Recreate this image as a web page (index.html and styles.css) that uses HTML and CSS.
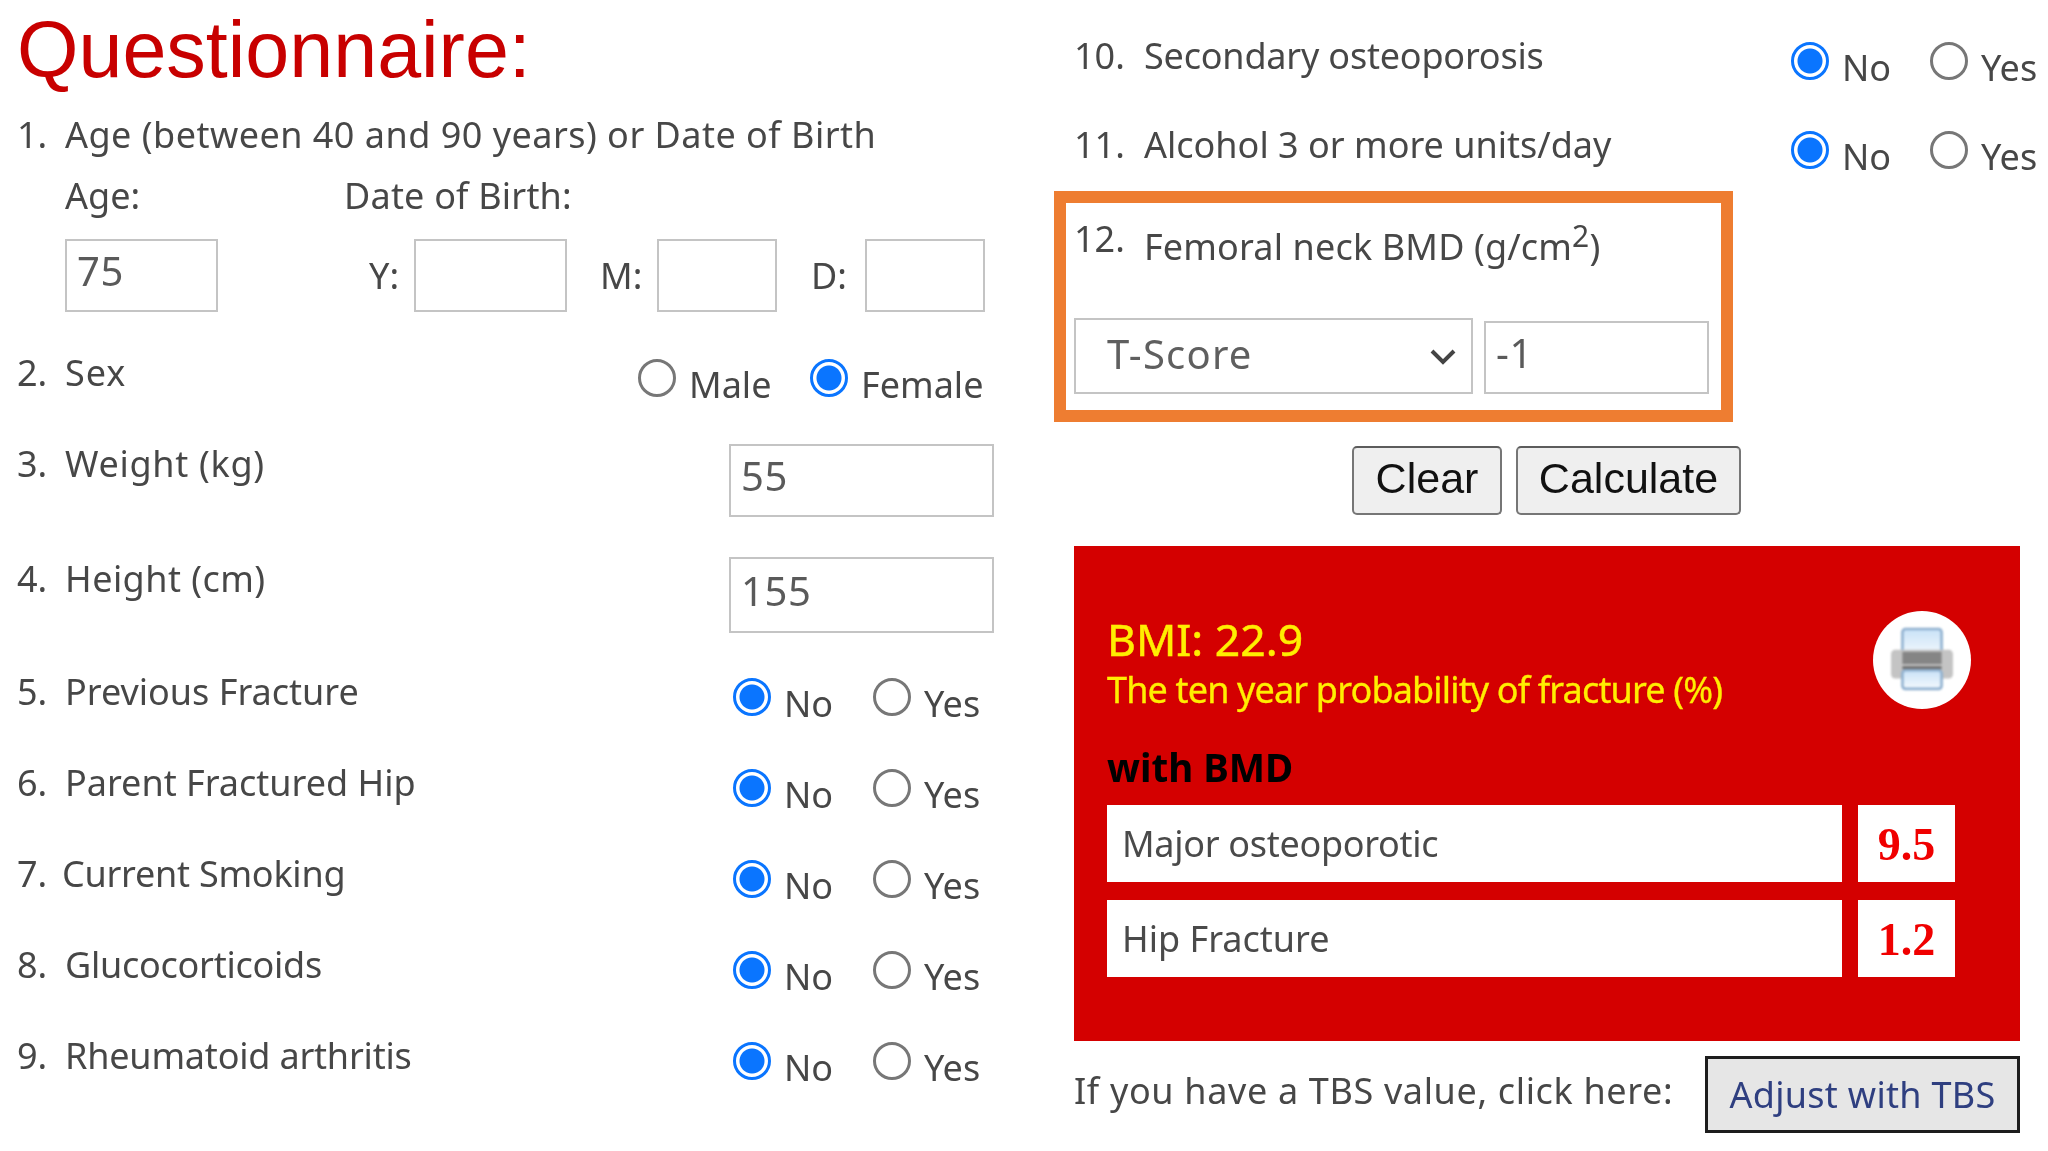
FILE: index.html
```html
<!DOCTYPE html>
<html lang="en">
<head>
<meta charset="utf-8">
<title>Questionnaire</title>
<link rel="stylesheet" href="styles.css">
</head>
<body>
<main class="page">
  <section class="left">
    <h1 class="title">Questionnaire:</h1>
    <div class="q q-first"><span class="num">1.</span><span class="t-age">Age (between 40 and 90 years) or Date of Birth</span></div>
    <div class="birth-labels"><span class="age-label">Age:</span><span class="t-dob">Date of Birth:</span></div>
    <div class="birth-inputs">
      <input class="field f-age" type="text" value="75">
      <label class="dl dl-y">Y:</label><input class="field f-y" type="text">
      <label class="dl dl-m">M:</label><input class="field f-md" type="text">
      <label class="dl dl-d">D:</label><input class="field f-md" type="text">
    </div>
    <div class="q q-sex"><span class="num">2.</span><span class="t-sex">Sex</span>
      <div class="opts opts-sex">
        <label class="opt opt-male"><input type="radio" name="sex"><span>Male</span></label>
        <label class="opt"><input type="radio" name="sex" checked><span>Female</span></label>
      </div>
    </div>
    <div class="q q-weight"><span class="num">3.</span><span class="t-weight">Weight (kg)</span><input class="field f-wide" type="text" value="55"></div>
    <div class="q q-height"><span class="num">4.</span><span class="t-height">Height (cm)</span><input class="field f-wide" type="text" value="155"></div>
    <div class="q q-yn"><span class="num">5.</span><span>Previous Fracture</span><div class="opts"><label class="opt"><input type="radio" name="q5" checked><span>No</span></label><label class="opt"><input type="radio" name="q5"><span>Yes</span></label></div></div>
    <div class="q q-yn"><span class="num">6.</span><span>Parent Fractured Hip</span><div class="opts"><label class="opt"><input type="radio" name="q6" checked><span>No</span></label><label class="opt"><input type="radio" name="q6"><span>Yes</span></label></div></div>
    <div class="q q-yn"><span class="num num-7">7.</span><span class="t-tight">Current Smoking</span><div class="opts"><label class="opt"><input type="radio" name="q7" checked><span>No</span></label><label class="opt"><input type="radio" name="q7"><span>Yes</span></label></div></div>
    <div class="q q-yn"><span class="num">8.</span><span class="t-tight">Glucocorticoids</span><div class="opts"><label class="opt"><input type="radio" name="q8" checked><span>No</span></label><label class="opt"><input type="radio" name="q8"><span>Yes</span></label></div></div>
    <div class="q q-yn"><span class="num">9.</span><span class="t-snug">Rheumatoid arthritis</span><div class="opts"><label class="opt"><input type="radio" name="q9" checked><span>No</span></label><label class="opt"><input type="radio" name="q9"><span>Yes</span></label></div></div>
  </section>
  <section class="right">
    <div class="q q-r q-r10"><span class="num">10.</span><span class="t-snug">Secondary osteoporosis</span><div class="opts"><label class="opt"><input type="radio" name="q10" checked><span>No</span></label><label class="opt"><input type="radio" name="q10"><span>Yes</span></label></div></div>
    <div class="q q-r q-r11"><span class="num">11.</span><span>Alcohol 3 or more units/day</span><div class="opts"><label class="opt"><input type="radio" name="q11" checked><span>No</span></label><label class="opt"><input type="radio" name="q11"><span>Yes</span></label></div></div>
    <div class="bmd">
      <div class="bmd-title"><span class="num num-12">12.</span><span class="bmd-text">Femoral neck BMD (g/cm<sup>2</sup>)</span></div>
      <div class="bmd-fields">
        <div class="select-wrap">
          <select class="select"><option>T-Score</option></select>
          <svg class="chev" viewBox="0 0 28 18" aria-hidden="true"><path d="M3 3l11 11L25 3" fill="none" stroke="#444" stroke-width="4"/></svg>
        </div>
        <input class="field f-score" type="text" value="-1">
      </div>
    </div>
    <div class="actions">
      <button class="btn btn-clear" type="button">Clear</button>
      <button class="btn btn-calc" type="button">Calculate</button>
    </div>
    <div class="panel">
      <div class="panel-head">
        <div>
          <div class="bmi">BMI: 22.9</div>
          <div class="prob">The ten year probability of fracture (%)</div>
        </div>
        <div class="print">
          <svg class="print-icon" viewBox="0 0 64 64" width="66" height="66" aria-hidden="true">
            <defs>
              <linearGradient id="paper" x1="0" y1="0" x2="0" y2="1"><stop offset="0" stop-color="#c9e2f7"/><stop offset="1" stop-color="#f4f9fd"/></linearGradient>
            </defs>
            <rect x="13" y="2" width="38" height="26" rx="3" fill="url(#paper)" stroke="#8fb0cf" stroke-width="2.5"/>
            <rect x="2" y="22" width="60" height="28" rx="4" fill="#c4c4c4"/>
            <rect x="13" y="24" width="38" height="12" fill="#858585"/>
            <rect x="13" y="38" width="38" height="3" fill="#6e6e6e"/>
            <rect x="13" y="42" width="38" height="18" rx="3" fill="url(#paper)" stroke="#8fb0cf" stroke-width="2.5"/>
          </svg>
        </div>
      </div>
      <div class="with">with BMD</div>
      <div class="res"><div class="res-name t-major">Major osteoporotic</div><div class="res-val">9.5</div></div>
      <div class="res"><div class="res-name">Hip Fracture</div><div class="res-val">1.2</div></div>
    </div>
    <div class="tbs">
      <span class="tbs-text">If you have a TBS value, click here:</span>
      <button class="tbs-btn" type="button">Adjust with TBS</button>
    </div>
  </section>
</main>
</body>
</html>
```

FILE: styles.css
```css
* { box-sizing: border-box; }
html, body { margin: 0; padding: 0; background: #fff; }
body {
  font-family: "Noto Sans", Tahoma, sans-serif;
  font-size: 36px;
  line-height: 50px;
  color: #474747;
}
.page {
  width: 2048px;
  height: 1151px;
  display: flex;
  overflow: hidden;
  filter: blur(0.5px);
}
.left { width: 1074px; padding-left: 17px; flex: none; }
.right { width: 974px; flex: none; }

.title {
  margin: 0;
  height: 110px;
  font-family: "Liberation Sans", Arial, sans-serif;
  font-size: 79px;
  line-height: 100px;
  font-weight: 400;
  color: #c80000;
}
.q { display: flex; width: 977px; height: 50px; }
.num { width: 48px; flex: none; }
.num-7 { width: 45px; }

.t-age { letter-spacing: 0.48px; }
.t-dob { letter-spacing: 0.2px; }
.t-sex { letter-spacing: 1px; }
.t-weight { letter-spacing: 0.7px; }
.t-height { letter-spacing: 0.45px; }
.t-tight { letter-spacing: -0.25px; }
.t-snug { letter-spacing: -0.2px; }

.birth-labels { display: flex; padding-left: 48px; margin-top: 11px; }
.age-label { width: 279px; }
.birth-inputs { display: flex; margin-top: 18px; height: 73px; align-items: center; padding-left: 48px; }
.field {
  height: 73px;
  border: 2px solid #c4c4c4;
  background: #fff;
  padding: 0 10px 10px 10px;
  font-family: inherit;
  font-size: 40px;
  letter-spacing: 0.6px;
  color: #5a5a5a;
  outline: 0;
}
.f-age { width: 153px; }
.f-y { width: 153px; }
.f-md { width: 120px; }
.dl { flex: none; }
.dl-y { width: 45px; margin-left: 151px; }
.dl-m { width: 57px; margin-left: 33px; }
.dl-d { width: 54px; margin-left: 34px; }

.opts { margin-left: auto; width: 261px; display: flex; flex: none; }
.opt { display: flex; width: 140px; flex: none; }
.opt input {
  appearance: none;
  flex: none;
  width: 38px;
  height: 38px;
  margin: 11px 13px 0 0;
  border: 3px solid #777;
  border-radius: 50%;
  background: #fff;
}
.opt input:checked {
  border: 3px solid #0a75ff;
  background: radial-gradient(circle, #0a75ff 0 12px, #fff 13px);
}
.opt span { margin-top: 12px; }

.q-sex { margin-top: 36px; }
.opts-sex { width: 356px; }
.opt-male { width: 172px; }
.q-weight { margin-top: 41px; height: 97px; }
.q-height { margin-top: 18px; height: 101px; }
.f-wide { width: 265px; margin-left: auto; margin-top: 5px; }
.q-height .f-wide { height: 76px; margin-top: 3px; }
.q-yn { height: 91px; }
.q-height + .q-yn { margin-top: 12px; }

.q-r { width: 966px; }
.q-r .num { width: 70px; }
.q-r .opts { width: 249px; }
.q-r .opt { width: 139px; }
.q-r10 { margin-top: 31px; height: 89px; }
.q-r11 { height: 71px; }

.bmd {
  margin-left: -20px;
  width: 679px;
  height: 231px;
  border: 12px solid #ee7d31;
  padding: 0 8px;
}
.bmd-title { display: flex; height: 115px; }
.num-12 { width: 70px; margin-top: 11px; }
.bmd-text { margin-top: 19px; letter-spacing: 0.15px; }
.bmd-text sup { font-size: 30px; line-height: 0; }
.bmd-fields { display: flex; align-items: flex-end; gap: 11px; }
.select-wrap { position: relative; flex: none; }
.select {
  appearance: none;
  display: block;
  width: 399px;
  height: 76px;
  border: 2px solid #c4c4c4;
  background: #fff;
  padding: 0 0 5px 31px;
  border-radius: 0;
  font-family: inherit;
  font-size: 40px;
  letter-spacing: 1.2px;
  color: #5f5f5f;
}
.chev { position: absolute; right: 16px; top: 30px; width: 28px; height: 18px; pointer-events: none; }
.f-score { width: 225px; }

.actions { display: flex; gap: 14px; margin: 24px 0 0 278px; }
.btn {
  height: 69px;
  border: 2px solid #767676;
  border-top-color: #5c5c5c;
  border-radius: 5px;
  background: #efefef;
  font-family: "Liberation Sans", Arial, sans-serif;
  font-size: 43px;
  color: #111;
  padding: 0 0 5px;
}
.btn-clear { width: 150px; }
.btn-calc { width: 225px; }

.panel {
  margin-top: 31px;
  width: 946px;
  height: 495px;
  background: #d40000;
  padding: 65px 64px 0 33px;
}
.panel-head { display: flex; justify-content: space-between; height: 131px; }
.bmi { font-size: 44.5px; line-height: 56px; color: #ffee00; -webkit-text-stroke: 0.5px #ffee00; }
.prob { font-size: 36px; line-height: 46px; color: #ffee00; letter-spacing: -0.85px; -webkit-text-stroke: 0.3px #ffee00; }
.print {
  width: 98px;
  height: 98px;
  margin: 0 -15px 0 0;
  border-radius: 50%;
  background: #fff;
  display: flex;
  align-items: center;
  justify-content: center;
  flex: none;
}
.print-icon { filter: blur(0.8px); }
.with { font-size: 38.5px; line-height: 50px; font-weight: 700; color: #000; margin-bottom: 13px; }
.res { display: flex; gap: 16px; height: 77px; margin-bottom: 18px; }
.res-name {
  width: 735px;
  background: #fff;
  padding: 0 15px;
  line-height: 77px;
  color: #4a4a4a;
}
.t-major { letter-spacing: -0.3px; }
.res-val {
  width: 97px;
  background: #fff;
  text-align: center;
  line-height: 79px;
  font-family: "Liberation Serif", "Times New Roman", serif;
  font-weight: 700;
  font-size: 46px;
  color: #f00000;
}
.tbs { display: flex; width: 946px; margin-top: 15px; height: 77px; justify-content: space-between; }
.tbs-text { margin-top: 10px; letter-spacing: 0.65px; }
.tbs-btn {
  width: 315px;
  height: 77px;
  border: 3px solid #1d1d1d;
  background: #e6e6e6;
  font: inherit;
  letter-spacing: 0.3px;
  color: #2f3f80;
  padding: 0;
}
```
